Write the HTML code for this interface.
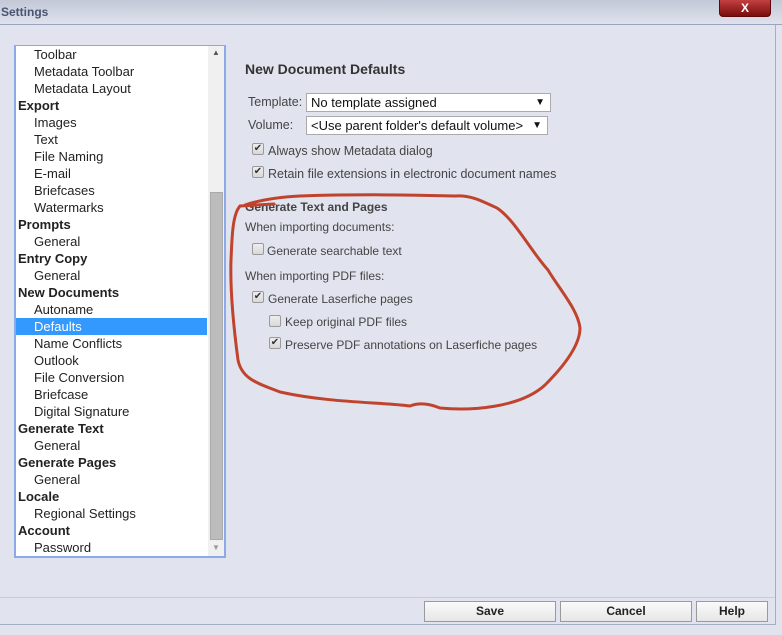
<!DOCTYPE html>
<html><head><style>
*{margin:0;padding:0;box-sizing:border-box}
body{width:782px;height:635px;background:#e1e4ee;font-family:"Liberation Sans",Arial,sans-serif;font-size:13px;color:#222;position:relative;overflow:hidden}
.title{position:absolute;left:0;top:0;width:782px;height:25px;background:linear-gradient(#c3c8d8,#dfe2ec);border-bottom:1px solid #9aa3bd}
.title span{position:absolute;left:1px;top:5px;font-size:12px;font-weight:bold;color:#4a5470}
.x{position:absolute;left:719px;top:0;width:52px;height:17px;background:linear-gradient(#c34040,#7a0c0c);border-radius:0 0 4px 4px;color:#fff;font-weight:bold;font-size:12px;text-align:center;line-height:16px;border:1px solid #5a0a0a;border-top:none}
.rb{position:absolute;left:775px;top:25px;width:1px;height:572px;background:#a7aec4}
.foot{position:absolute;left:0;top:597px;width:776px;height:1px;background:#c7cbe0}
.fr{position:absolute;left:775px;top:597px;width:1px;height:27px;background:#a7aec4}
.fb{position:absolute;left:0;top:624px;width:776px;height:1px;background:#a7aec4}
.btn{position:absolute;top:601px;height:21px;background:linear-gradient(#fafafa,#e6e6e6);border:1px solid #9a9a9a;font-weight:bold;font-size:12px;text-align:center;line-height:19px;color:#222}
.list{position:absolute;left:14px;top:45px;width:212px;height:513px;background:#fff;border:2px solid #8daae8;border-top:1px solid #8daae8;overflow:hidden}
.list > .it{height:17px;line-height:17px;white-space:nowrap}
.h{font-weight:bold;padding-left:2px}
.s{padding-left:18px}
.sel{background:#3399ff;color:#fff;margin-right:17px}
.sb{position:absolute;left:192px;top:0;width:17px;height:512px;background:#f0f0f0}
.th{position:absolute;left:2px;top:146px;width:13px;height:348px;background:#bcbcbc;border:1px solid #aaa}
.t{position:absolute;white-space:nowrap}
.cb{position:absolute;width:12px;height:12px;border:1px solid #9a9a9a;background:linear-gradient(#eee,#d8d8d8);border-radius:2px;font-size:10px;line-height:10px;text-align:center;color:#333}
.sel2{position:absolute;height:19px;background:#fff;border:1px solid #aaa;font-size:13px;line-height:17px;padding-left:4px;color:#111}
.sel2 b{position:absolute;right:5px;top:0;font-size:10px;background:#fff}
.g{color:#444}
</style></head><body>
<div class="title"><span>Settings</span></div>
<div class="x">X</div>
<div class="rb"></div>
<div class="list">
<div class="it s">Toolbar</div><div class="it s">Metadata Toolbar</div><div class="it s">Metadata Layout</div>
<div class="it h">Export</div><div class="it s">Images</div><div class="it s">Text</div><div class="it s">File Naming</div><div class="it s">E-mail</div><div class="it s">Briefcases</div><div class="it s">Watermarks</div>
<div class="it h">Prompts</div><div class="it s">General</div>
<div class="it h">Entry Copy</div><div class="it s">General</div>
<div class="it h">New Documents</div><div class="it s">Autoname</div><div class="it s sel">Defaults</div><div class="it s">Name Conflicts</div><div class="it s">Outlook</div><div class="it s">File Conversion</div><div class="it s">Briefcase</div><div class="it s">Digital Signature</div>
<div class="it h">Generate Text</div><div class="it s">General</div>
<div class="it h">Generate Pages</div><div class="it s">General</div>
<div class="it h">Locale</div><div class="it s">Regional Settings</div>
<div class="it h">Account</div><div class="it s">Password</div>
<div class="sb"><span style="position:absolute;left:4px;top:2px;font-size:8px;color:#555">▲</span><div class="th"></div><span style="position:absolute;left:4px;top:497px;font-size:8px;color:#999">▼</span></div>
</div>
<div class="t" style="left:245px;top:61px;font-weight:bold;font-size:14px;color:#333">New Document Defaults</div>
<div class="t g" style="left:248px;top:95px;font-size:12.5px">Template:</div>
<div class="sel2" style="left:306px;top:93px;width:245px">No template assigned<b>▼</b></div>
<div class="t g" style="left:248px;top:118px;font-size:12.5px">Volume:</div>
<div class="sel2" style="left:306px;top:116px;width:242px">&lt;Use parent folder's default volume&gt;<b>▼</b></div>
<div class="cb" style="left:252px;top:143px">✔</div><div class="t g" style="left:268px;top:144px;font-size:12.5px">Always show Metadata dialog</div>
<div class="cb" style="left:252px;top:166px">✔</div><div class="t g" style="left:268px;top:167px;font-size:12.5px">Retain file extensions in electronic document names</div>
<div class="t" style="left:245px;top:200px;font-weight:bold;font-size:12px;color:#444">Generate Text and Pages</div>
<div class="t g" style="left:245px;top:220px;font-size:12px">When importing documents:</div>
<div class="cb" style="left:252px;top:243px"></div><div class="t g" style="left:267px;top:244px;font-size:12px">Generate searchable text</div>
<div class="t g" style="left:245px;top:269px;font-size:12px">When importing PDF files:</div>
<div class="cb" style="left:252px;top:291px">✔</div><div class="t g" style="left:268px;top:292px;font-size:12px">Generate Laserfiche pages</div>
<div class="cb" style="left:269px;top:315px"></div><div class="t g" style="left:285px;top:315px;font-size:12px">Keep original PDF files</div>
<div class="cb" style="left:269px;top:337px">✔</div><div class="t g" style="left:285px;top:338px;font-size:12px">Preserve PDF annotations on Laserfiche pages</div>
<svg style="position:absolute;left:0;top:0" width="782" height="635">
<path d="M274 204 L240 206 C232 215 232 240 231 260 C230 290 234 330 238 360 C242 380 260 384 280 392 C330 403 380 402 410 406 C420 402 430 404 440 408 C470 411 520 408 545 385 C565 365 580 345 580 328 C578 310 560 290 548 270 C530 250 515 220 497 208 C480 200 470 195 455 196 C420 195 360 194 300 196 C280 197 260 200 245 205" fill="none" stroke="#c0432e" stroke-width="3" stroke-linecap="round"/>
</svg>
<div class="foot"></div><div class="fr"></div><div class="fb"></div>
<div class="btn" style="left:424px;width:132px">Save</div>
<div class="btn" style="left:560px;width:132px">Cancel</div>
<div class="btn" style="left:696px;width:72px">Help</div>
</body></html>
